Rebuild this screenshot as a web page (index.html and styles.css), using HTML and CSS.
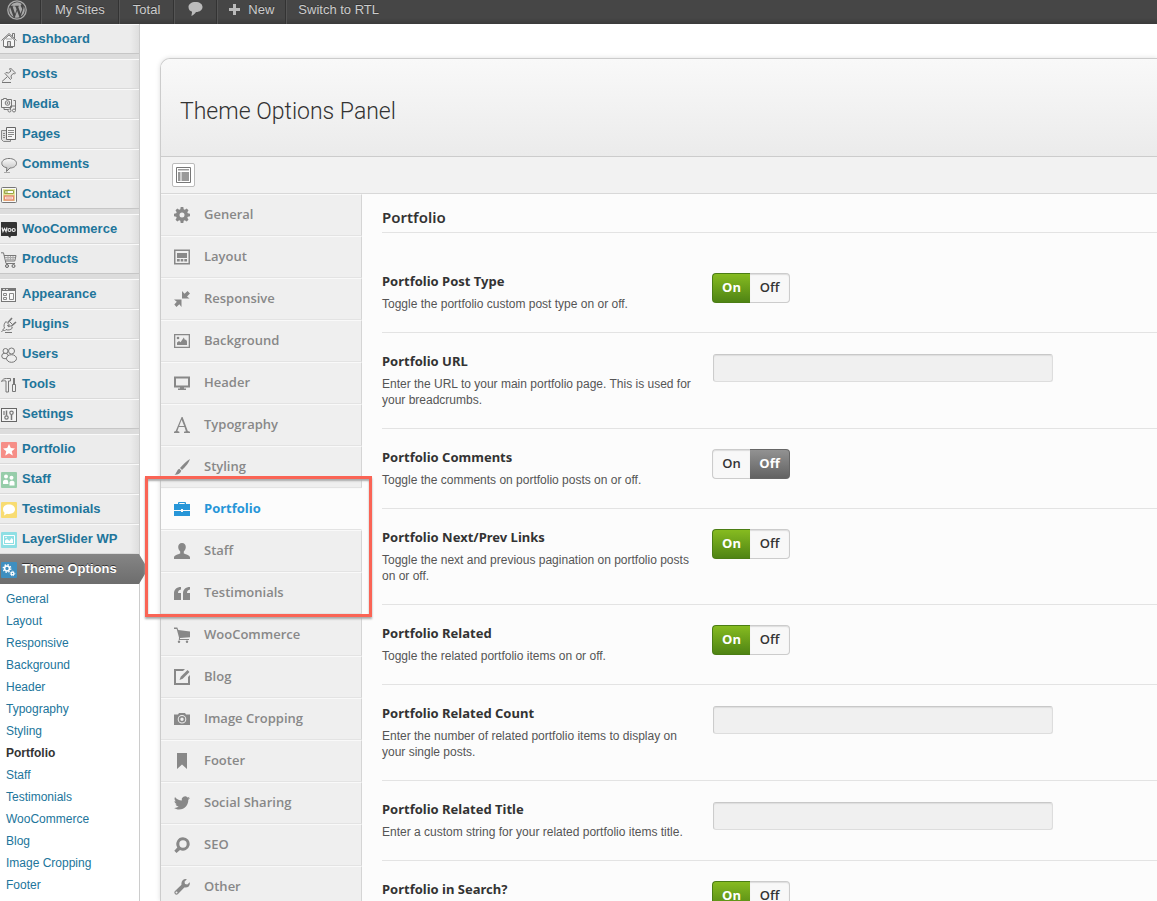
FILE: index.html
```html
<!DOCTYPE html>
<html lang="en">
<head>
<meta charset="utf-8">
<title>Theme Options Panel</title>
<link rel="stylesheet" href="styles.css">
</head>
<body>
<div class="page">
<header class="adminbar">
  <a class="bar-item bar-logo" href="#" aria-label="WordPress"><svg width="20" height="20" viewBox="0 0 20 20"><circle cx="10" cy="10" r="9.2" fill="none" stroke="#aaa" stroke-width="1.3"/><path fill="#aaa" d="M2.3 10c0 3 1.800 5.700 4.300 6.900L3 7C2.500 8 2.300 9 2.300 10zM15.200 9.600c0-1-.4-1.600-.7-2.100-.4-.7-.8-1.200-.8-1.900 0-.7.5-1.400 1.300-1.400A7.700 7.700 0 0 0 3.600 5.800h2.900v.6h-.9l2.500 7.500 1.500-4.500-1.100-3h-.9v-.6h4.500v.6h-1l2.500 7.400.7-2.300c.4-1 .9-1.300.9-1.900zM10.100 10.700l-2.300 6.700c1.500.4 3.200.4 4.700-.1zM16.700 6.300c.1 1.400-.2 2.500-.6 3.500l-2.300 6.800c3.600-2 5.100-6.600 2.900-10.300z"/></svg></a>
  <a class="bar-item" href="#">My Sites</a>
  <a class="bar-item" href="#">Total</a>
  <a class="bar-item" href="#" aria-label="Comments"><svg width="15" height="14" viewBox="0 0 15 14"><path fill="#bbb" d="M7.500 0C3.400 0 .5 2.100.5 5c0 2.600 1.500 4.200 3.600 4.700L3.400 14c2-1 3.600-2.400 4.600-4 4-.1 6.500-2 6.500-5s-2.900-5-7-5z"/></svg></a>
  <a class="bar-item bar-new" href="#"><svg width="11" height="11" viewBox="0 0 11 11"><path fill="#bbb" d="M4 0h3v4h4v3H7v4H4V7H0V4h4z"/></svg>New</a>
  <a class="bar-item bar-new" href="#">Switch to RTL</a>
</header>
<div class="columns">
<nav class="sidebar" aria-label="Admin menu">
  <ul class="menu">
    <li><a href="#"><svg class="ic" viewBox="0 0 16 16"><g fill="none" stroke="#777"><path fill="#f6f6f6" d="M2.500 8v6.500h11V8L8 3z"/><path d="M.5 8.500L8 1.500l7.500 7M11.500 4.500v-3h2v5M6.500 14.500v-5h3v5M4 15.500h8"/><path stroke="#aaa" d="M5 7h6M8 10v4"/></g></svg>Dashboard</a></li>
  </ul>
  <ul class="menu">
    <li><a href="#"><svg class="ic" viewBox="0 0 16 16"><path fill="#e8e8e8" stroke="#777" d="M9.500 1l5 5-1 1-1.500-.5-2 2.500.5 2.500-1 1L4 6.500l1-1 2.500.5L10 4 8.500 2z"/><path stroke="#777" d="M6 10l-5 4.500M1 15.500h9" fill="none"/></svg>Posts</a></li>
    <li><a href="#"><svg class="ic" viewBox="0 0 16 16"><g fill="#f2f2f2" stroke="#777"><path d="M.5 2.500h2v-1h3v1h5v8H.5z"/><circle cx="6.500" cy="6" r="2.300"/><circle cx="6.500" cy="6" r=".6"/><path fill="none" d="M12.500 3.500h2v10M9.500 14v-5h5M3 10.500v2h4"/><circle cx="8.500" cy="13.500" r="1.500"/><circle cx="13" cy="13.500" r="1.500"/></g></svg>Media</a></li>
    <li><a href="#"><svg class="ic" viewBox="0 0 16 16"><path fill="#ddd" stroke="#888" d="M.5 3.500h9v11h-7l-2-2z"/><path fill="#f6f6f6" stroke="#666" d="M5.500.5h9v12h-9z"/><path stroke="#888" d="M7 3.500h6M7 5.500h6M7 7.500h6M7 9.500h4M2 6.500h2M2 8.500h2M2 10.500h2"/></svg>Pages</a></li>
    <li><a href="#"><svg class="ic" viewBox="0 0 16 16"><defs><linearGradient id="bub" x2="0" y2="1"><stop stop-color="#fafafa"/><stop offset="1" stop-color="#bbb"/></linearGradient></defs><path fill="url(#bub)" stroke="#777" d="M8 1.500c4.200 0 7.500 2 7.500 4.800s-3 4.700-6.500 4.700l-3.500 3.500.3-3.800C2.500 10.200.8 8.500.8 6.300.8 3.500 3.800 1.500 8 1.500z"/><path stroke="#aaa" d="M3 15.500h6"/></svg>Comments</a></li>
    <li><a href="#"><svg class="ic" viewBox="0 0 16 16"><rect x=".5" y=".5" width="15" height="15" rx="1" fill="#fafafa" stroke="#777"/><path fill="#e4e89c" d="M2 2h12v12H2z"/><path fill="#fff" stroke="#9aa648" d="M3.500 3.500h9v3h-9z"/><path stroke="#9aa648" d="M4 5h3"/><path fill="#fff" stroke="#e58a70" stroke-width="1.500" d="M3.500 9h9v4h-9z"/><path stroke="#e58a70" d="M5 11h6"/></svg>Contact</a></li>
  </ul>
  <ul class="menu">
    <li><a href="#"><svg class="ic" viewBox="0 0 16 16"><path fill="#333" d="M0 0h15q1 0 1 1v12q0 1-1 1h-5l-1 2-2-2H0z"/><path fill="none" stroke="#eee" stroke-width="1.200" d="M1 5.500l1 4 1.500-3 1.500 3 1-4"/><circle cx="8.500" cy="8" r="1.500" fill="none" stroke="#eee" stroke-width="1.200"/><circle cx="12.700" cy="8" r="1.500" fill="none" stroke="#eee" stroke-width="1.200"/></svg>WooCommerce</a></li>
    <li><a href="#"><svg class="ic" viewBox="0 0 16 16"><path fill="#eee" stroke="#777" d="M0 .8h2.500L5 11.500h9M3 3.500h12l-1.200 5.500H4.500"/><path stroke="#aaa" d="M4 5.500h10M4.500 7.300h9M7 4v5M9.500 4v5M12 4v5"/><circle cx="6" cy="14" r="1.500" fill="#ddd" stroke="#666"/><circle cx="12.500" cy="14" r="1.500" fill="#ddd" stroke="#666"/></svg>Products</a></li>
  </ul>
  <ul class="menu">
    <li><a href="#"><svg class="ic" viewBox="0 0 16 16"><rect x=".5" y="1.500" width="14" height="13" fill="#f8f8f8" stroke="#777"/><path fill="#777" d="M0 1h15v3H0z"/><path stroke="#ddd" d="M2 2.500h2M5 2.500h2"/><path fill="none" stroke="#888" d="M2.500 6.500h3v2h-3zM2.500 10.500h3v2h-3zM8.500 6.500h4v6h-4z"/></svg>Appearance</a></li>
    <li><a href="#"><svg class="ic" viewBox="0 0 16 16"><path fill="#eee" stroke="#777" d="M5 4.500L11.500 11c-2 2-4.500 2.500-6.500 1.500L3.500 14 2 12.500 3.500 11C2.500 9 3 6.500 5 4.500z"/><path stroke="#777" stroke-width="1.600" fill="none" d="M7 5.500l4-4.500M10.500 9l4.500-4M6.500 8l2 2"/><path stroke="#777" fill="none" d="M3 13c-1 0-1.500.5-2.500 2M4 15.500h7M9 5l2.500 2.500"/></svg>Plugins</a></li>
    <li><a href="#"><svg class="ic" viewBox="0 0 16 16"><g fill="#eee" stroke="#777"><circle cx="4.500" cy="4" r="2.500"/><ellipse cx="4" cy="9" rx="3.300" ry="2.800"/><circle cx="10.500" cy="4" r="3"/><ellipse cx="10.500" cy="11.500" rx="5" ry="3.800"/></g></svg>Users</a></li>
    <li><a href="#"><svg class="ic" viewBox="0 0 16 16"><g fill="#eee" stroke="#777"><path d="M.5 4.500c1-2.500 3-3 5-3h4v2.500h-2v11h-2.500V4C3 3.500 2 3.800.5 4.500z"/><path d="M12.500 1v6M11.500 7.500h3v7h-3zM13.500 1v6"/></g></svg>Tools</a></li>
    <li><a href="#"><svg class="ic" viewBox="0 0 16 16"><rect x=".5" y="1.500" width="15" height="13" fill="#f4f4f4" stroke="#666"/><path stroke="#777" stroke-width="1.500" d="M5.500 3.500v5M10.500 8v5"/><g fill="none" stroke="#777" stroke-width="1.200"><circle cx="5.500" cy="10.500" r="1.700"/><circle cx="10.500" cy="5.800" r="1.700"/><path d="M3 4v4"/></g></svg>Settings</a></li>
  </ul>
  <ul class="menu">
    <li><a href="#"><svg class="ic" viewBox="0 0 16 16"><rect width="16" height="16" rx="1" fill="#f68e87"/><path fill="#fff" d="M8 2l1.800 4 4.200.4-3.200 2.900 1 4.200L8 11.300l-3.800 2.200 1-4.200L2 6.400 6.200 6z"/></svg>Portfolio</a></li>
    <li><a href="#"><svg class="ic" viewBox="0 0 16 16"><rect width="16" height="16" rx="1" fill="#97cdaa"/><g fill="#fff"><circle cx="5" cy="4.500" r="2"/><circle cx="10.500" cy="5.800" r="2"/><path d="M2 12V9.500c0-2 4.800-2.500 5-.5l.5 3zM8.500 13.500v-3c0-2.500 5-2.500 5 0v3z"/></g></svg>Staff</a></li>
    <li><a href="#"><svg class="ic" viewBox="0 0 16 16"><rect width="16" height="16" rx="1" fill="#f8dc72"/><path fill="#fff" d="M8 2.500c3.500 0 6 2 6 4.800S11.500 12 8 12c-.8 0-1.400 0-2-.2L3 13.500l.5-2.800C2.500 10 2 8.800 2 7.300c0-2.800 2.500-4.800 6-4.800z"/></svg>Testimonials</a></li>
    <li><a href="#"><svg class="ic" viewBox="0 0 16 16"><rect width="16" height="16" rx="1" fill="#8fdfe4"/><path fill="none" stroke="#fff" d="M2.500 3.500h11v9h-11z"/><path fill="#fff" d="M4 11V8.500L6 7l2.500 2 2-3 1.500 1.500V11z"/><circle cx="5" cy="5.500" r=".8" fill="#fff"/></svg>LayerSlider WP</a></li>
    <li class="current"><a href="#"><svg class="ic" viewBox="0 0 16 16"><rect width="16" height="16" rx="1" fill="#3f8fc0"/><circle cx="6" cy="6.500" r="2.400" fill="none" stroke="#fff" stroke-width="1.500"/><circle cx="6" cy="6.500" r="3.700" fill="none" stroke="#fff" stroke-width="1.500" stroke-dasharray="1.450 1.450"/><circle cx="11.500" cy="11.500" r="1.300" fill="none" stroke="#fff" stroke-width="1.200"/><circle cx="11.500" cy="11.500" r="2.300" fill="none" stroke="#fff" stroke-dasharray="1 .8"/></svg>Theme Options</a></li>
  </ul>
  <ul class="submenu">
    <li><a href="#">General</a></li>
    <li><a href="#">Layout</a></li>
    <li><a href="#">Responsive</a></li>
    <li><a href="#">Background</a></li>
    <li><a href="#">Header</a></li>
    <li><a href="#">Typography</a></li>
    <li><a href="#">Styling</a></li>
    <li><a class="active" href="#">Portfolio</a></li>
    <li><a href="#">Staff</a></li>
    <li><a href="#">Testimonials</a></li>
    <li><a href="#">WooCommerce</a></li>
    <li><a href="#">Blog</a></li>
    <li><a href="#">Image Cropping</a></li>
    <li><a href="#">Footer</a></li>
  </ul>
</nav>
<main class="panel">
  <div class="panel-head"><h1>Theme Options Panel</h1></div>
  <div class="toolbar"><button type="button" class="tool" aria-label="Toggle layout"><svg width="15" height="16" viewBox="0 0 15 16"><path fill="#fff" stroke="#777" d="M.5.5h14v15H.5z"/><path fill="#999" d="M2 2h11v1.500H2zM2 5h2.500v9H2zM5.500 5H13v9H5.500z"/></svg></button></div>
  <div class="panel-body">
    <nav class="tabs" aria-label="Option sections">
      <a href="#"><svg class="ti" viewBox="0 0 16 16"><path fill-rule="evenodd" d="M6.700 0h2.600l.4 2.200 1.100.5L12.700 1.500l1.800 1.800-1.200 1.900.5 1.100 2.200.4v2.600l-2.200.4-.5 1.100 1.200 1.900-1.800 1.800-1.900-1.200-1.100.5-.4 2.200H6.700l-.4-2.200-1.100-.5-1.900 1.200-1.800-1.800 1.200-1.900-.5-1.100L0 9.300V6.700l2.200-.4.5-1.100L1.500 3.300l1.800-1.800 1.900 1.200 1.100-.5zM8 5.500a2.500 2.500 0 1 0 0 5 2.500 2.500 0 0 0 0-5z"/></svg>General</a>
      <a href="#"><svg class="ti" viewBox="0 0 16 16"><path fill-rule="evenodd" d="M0 .5h16v15H0zM1.500 2v12h13V2z"/><path d="M3 4h10v5H3zM3 10h2.700v2.500H3zM6.700 10h2.600v2.500H6.700zM10.300 10H13v2.500h-2.700z"/></svg>Layout</a>
      <a href="#"><svg class="ti" viewBox="0 0 16 16"><path d="M8 0v7.500h7.500L13 5.500l3-3L13.500 0 10.500 2.700zM0 8.500h7.500V16L5.300 13.300 2.500 16 .3 13.500l2.500-2.700z"/></svg>Responsive</a>
      <a href="#"><svg class="ti" viewBox="0 0 16 16"><path fill-rule="evenodd" d="M0 1h16v14H0zM1.300 2.300v11.400h13.400V2.300z"/><circle cx="4" cy="5" r="1.300"/><path d="M3 12V9.500L5 8l1.500 1.300L9.800 4.500 11 7l1-.5 1 2V12z"/></svg>Background</a>
      <a href="#"><svg class="ti" viewBox="0 0 16 16"><path fill-rule="evenodd" d="M0 1.500h16v11H0zM2 3.500v7h12v-7z"/><path d="M6 12h4v1.500h2V15H4v-1.500h2z"/></svg>Header</a>
      <a href="#"><svg class="ti" viewBox="0 0 16 16"><path fill-rule="evenodd" d="M7.600 0h1l5.200 14 2.200.8v1.100h-6v-1.100l1.900-.6L10.500 10H4.800l-1.400 4 2 .8v1.100H0v-1.100l1.700-.7zM7.600 2.700L5.200 9h5z"/></svg>Typography</a>
      <a href="#"><svg class="ti" viewBox="0 0 16 16"><path d="M16 0c-1 3.500-4.500 8-8 11L6 9C9 5.500 12.500 2 16 0zM5.300 9.700l2 2C6.300 14.500 4 16 .5 15.800c1.800-1 2.200-4.800 4.800-6.100z"/></svg>Styling</a>
      <a href="#" class="on"><svg class="ti" viewBox="0 0 16 16"><path fill-rule="evenodd" d="M0 3h4V2q0-1 1-1h6q1 0 1 1v1h4v6h-7V8H7v1H0zM5.300 3h5.400V2H5.300zM0 10h7v1h2v-1h7v5H0z"/></svg>Portfolio</a>
      <a href="#"><svg class="ti" viewBox="0 0 16 16"><path d="M8 0c2.500 0 3.800 1.700 3.800 4 0 1.800-.8 3.300-2 4.500v2C12 11.500 16 12.300 16 14.500V16H0v-1.500c0-2.200 4-3 6.200-4v-2c-1.200-1.200-2-2.700-2-4.500C4.200 1.700 5.500 0 8 0z"/></svg>Staff</a>
      <a href="#"><svg class="ti" viewBox="0 0 16 16"><path d="M7 2v2.500C4.800 5 4 6.300 4 8h3v7H0V8.500C0 4.500 2.500 2 7 2zM16 2v2.500C13.800 5 13 6.300 13 8h3v7H9V8.500C9 4.500 11.500 2 16 2z"/></svg>Testimonials</a>
      <a href="#"><svg class="ti" viewBox="0 0 16 16"><path d="M0 .5h3.300l1 2.500L16 4.500v5.800L6 11v1h9v1H4.800L5 10.500 2.700 2H0z"/><circle cx="5" cy="14.800" r="1.200"/><circle cx="13" cy="14.800" r="1.200"/></svg>WooCommerce</a>
      <a href="#"><svg class="ti" viewBox="0 0 16 16"><path d="M0 0h11L9 2H2v12h12V8l2-2v10H0z"/><path d="M13.500 1l2 2-6.800 6.800-3.200 1.300 1.200-3.300z"/></svg>Blog</a>
      <a href="#"><svg class="ti" viewBox="0 0 16 16"><path fill-rule="evenodd" d="M0 3.500h4l1-1.500h6l1 1.500h4V14H0zM8 4a4.300 4.300 0 1 0 0 8.600A4.300 4.300 0 0 0 8 4z"/><circle cx="8" cy="8.300" r="2.500" fill="none" stroke="currentColor" stroke-width="1.600"/></svg>Image Cropping</a>
      <a href="#"><svg class="ti" viewBox="0 0 16 16"><path d="M3 0h10v16l-5-4.500L3 16z"/></svg>Footer</a>
      <a href="#"><svg class="ti" viewBox="0 0 16 16"><path d="M16 3c-.6.300-1.200.5-1.900.5.7-.4 1.200-1 1.400-1.800-.6.400-1.300.6-2 .8A3.300 3.300 0 0 0 7.800 5.500C5 5.400 2.600 4 1 2c-.9 1.500-.4 3.400 1 4.400-.5 0-1-.2-1.500-.4 0 1.600 1.100 2.900 2.600 3.200-.5.100-1 .2-1.500.1.400 1.300 1.600 2.200 3.100 2.300A6.600 6.600 0 0 1 0 13c1.400.9 3.100 1.500 5 1.500 6 0 9.500-5.100 9.300-9.800.7-.5 1.200-1 1.700-1.700z"/></svg>Social Sharing</a>
      <a href="#"><svg class="ti" viewBox="0 0 16 16"><path fill-rule="evenodd" d="M9 .3a6.700 6.700 0 1 1-3 12.700l-3.500 3L.3 13.800l3-3.300A6.700 6.700 0 0 1 9 .3zM9 3.300a3.700 3.700 0 1 0 0 7.400 3.700 3.700 0 0 0 0-7.400z"/></svg>SEO</a>
      <a href="#"><svg class="ti" viewBox="0 0 16 16"><path fill-rule="evenodd" d="M12.800.3L10.500 2.700l.5 2.300 2.300.5 2.400-2.300c.8 2.800-1.300 6-5.400 5.300L4 15c-2 2-5-.9-3-3l6.500-6.200C6.700 2 10-.6 12.800.3zM2.500 12.500a1 1 0 1 0 0 2 1 1 0 0 0 0-2z"/></svg>Other</a>
      <span class="highlight"></span>
    </nav>
    <form class="options">
      <h2>Portfolio</h2>
      <fieldset class="row"><div class="info"><h3>Portfolio Post Type</h3><p>Toggle the portfolio custom post type on or off.</p></div>
        <div class="toggle"><label><input type="radio" name="ptype" checked>On</label><label class="off"><input type="radio" name="ptype">Off</label></div></fieldset>
      <div class="row"><div class="info"><h3><label for="url">Portfolio URL</label></h3><p>Enter the URL to your main portfolio page. This is used for your breadcrumbs.</p></div>
        <input class="text" id="url" type="text"></div>
      <fieldset class="row"><div class="info"><h3>Portfolio Comments</h3><p>Toggle the comments on portfolio posts on or off.</p></div>
        <div class="toggle"><label><input type="radio" name="comments">On</label><label class="off"><input type="radio" name="comments" checked>Off</label></div></fieldset>
      <fieldset class="row"><div class="info"><h3>Portfolio Next/Prev Links</h3><p>Toggle the next and previous pagination on portfolio posts on or off.</p></div>
        <div class="toggle"><label><input type="radio" name="links" checked>On</label><label class="off"><input type="radio" name="links">Off</label></div></fieldset>
      <fieldset class="row"><div class="info"><h3>Portfolio Related</h3><p>Toggle the related portfolio items on or off.</p></div>
        <div class="toggle"><label><input type="radio" name="related" checked>On</label><label class="off"><input type="radio" name="related">Off</label></div></fieldset>
      <div class="row"><div class="info"><h3><label for="count">Portfolio Related Count</label></h3><p>Enter the number of related portfolio items to display on your single posts.</p></div>
        <input class="text" id="count" type="text"></div>
      <div class="row"><div class="info"><h3><label for="rtitle">Portfolio Related Title</label></h3><p>Enter a custom string for your related portfolio items title.</p></div>
        <input class="text" id="rtitle" type="text"></div>
      <fieldset class="row"><div class="info"><h3>Portfolio in Search?</h3></div>
        <div class="toggle"><label><input type="radio" name="search" checked>On</label><label class="off"><input type="radio" name="search">Off</label></div></fieldset>
    </form>
  </div>
</main>
</div>
</div>
</body>
</html>
```

FILE: styles.css
```css
* { box-sizing: border-box; }
body { margin: 0; background: #fff; font-family: "Liberation Sans", Arial, sans-serif; font-size: 12px; color: #555; }
ul, h1, h2, h3, p { margin: 0; padding: 0; }
ul { list-style: none; }
a { text-decoration: none; }
.page { height: 100vh; overflow: hidden; display: flex; flex-direction: column; }

/* top bar */
.adminbar { flex: none; display: flex; height: 24px; background: linear-gradient(#464646 75%, #3a3a3a); }
.bar-item { display: flex; align-items: center; gap: 8px; padding: 0 13px 6px; font-size: 13px; color: #ccc; text-shadow: 0 -1px 0 #333; border-right: 1px solid #333; border-left: 1px solid #555; }
.bar-logo { padding: 0 13px 4px 7px; border-left: 0; }
.bar-new { padding: 0 11px 6px; }
.bar-item:last-child { border-right: 0; }

/* main menu */
.columns { flex: 1; display: flex; min-height: 0; }
.sidebar { flex: none; width: 140px; border-right: 1px solid #ccc; background: #fff; }
.menu { background: linear-gradient(90deg, #ececec 130px, #dedede); border-bottom: 5px solid #dcdcdc; box-shadow: inset 0 -1px 0 #c6c6c6; }
.menu:nth-last-child(2) { border-bottom: 0; }
.menu a { display: flex; align-items: center; gap: 5px; height: 30px; padding: 0 0 2px 1px; border-top: 1px solid #f9f9f9; border-bottom: 1px solid #dadada; font-size: 13px; font-weight: bold; color: #21759b; }
.menu li:last-child a { border-bottom-color: #c6c6c6; }
.ic { flex: none; width: 16px; height: 16px; margin-top: 4px; }
.current { position: relative; }
.menu .current a { background: linear-gradient(#858585, #6d6d6d); border-top: 0; border-bottom: 0; color: #fff; text-shadow: 0 -1px 0 #333; }
.current::after { content: ""; position: absolute; left: 100%; top: 0; width: 9px; height: 30px; background: linear-gradient(#858585, #6d6d6d); clip-path: polygon(0 0, 100% 50%, 0 100%); }
.submenu { padding: 4px 0 4px 6px; }
.submenu a { display: block; line-height: 22px; color: #21759b; }
.submenu .active { color: #333; font-weight: bold; }

/* panel */
.panel { flex: 1; display: flex; flex-direction: column; min-width: 0; margin: 34px 0 0 20px; border: 1px solid #ccc; border-right: 0; border-bottom: 0; border-radius: 10px 0 0 0; background: #fcfcfc; box-shadow: 0 0 5px #ddd; }
.panel-head { flex: none; display: flex; align-items: center; height: 98px; padding: 8px 19px 0; border-bottom: 1px solid #ccc; border-radius: 9px 0 0 0; background: linear-gradient(#f9f9f9, #ebebeb); }
h1 { font-family: Roboto, "Liberation Sans", sans-serif; font-size: 23px; font-weight: 300; color: #333; }
.toolbar { flex: none; display: flex; align-items: center; height: 37px; padding: 0 11px; background: #f2f2f2; border-bottom: 1px solid #d8d8d8; }
.tool { display: flex; align-items: center; justify-content: center; width: 23px; height: 24px; padding: 0; background: #fff; border: 1px solid #bbb; border-radius: 2px; }
.panel-body { flex: 1; display: flex; min-height: 0; }
.tabs { flex: none; position: relative; width: 201px; font-family: "Open Sans", sans-serif; }
.tabs a { display: flex; align-items: center; gap: 14px; height: 42px; padding: 0 0 2px 13px; background: #efefef; border-top: 1px solid #f9f9f9; border-bottom: 1px solid #e3e3e3; border-right: 1px solid #d5d5d5; font-size: 13px; font-weight: 600; color: #888; }
.tabs .on { background: #fcfcfc; border-right-color: #fcfcfc; color: #2796d8; font-weight: 700; }
.ti { flex: none; width: 16px; height: 16px; margin-top: 2px; fill: currentColor; }
/* callout frame around the post type tabs */
.highlight { position: absolute; left: -16px; top: 282px; width: 227px; height: 141px; border: 3px solid #fa6455; box-shadow: 0 2px 2px #aaa, inset 0 2px 2px #aaa; pointer-events: none; }

/* options */
.options { flex: 1; min-width: 0; padding-left: 20px; }
h2 { margin-bottom: 20px; padding: 11px 0 3px; border-bottom: 1px solid #e3e3e3; font: 600 15px/24px "Noto Sans", sans-serif; color: #333; }
.row { display: grid; grid-template-columns: 320px minmax(0, 1fr); column-gap: 10px; margin: 0; padding: 18px 0 20px; border: 0; border-bottom: 1px solid #e3e3e3; }
h3 { margin-bottom: 5px; font: 700 13px/20px "Noto Sans", sans-serif; color: #333; }
.info p { line-height: 16px; }
.toggle { display: flex; margin-top: 2px; height: 30px; }
.toggle label { display: flex; align-items: center; justify-content: center; position: relative; width: 38px; padding-bottom: 2px; background: #f8f8f8; border: 1px solid #ccc; border-right: 0; border-radius: 4px 0 0 4px; box-shadow: inset 0 1px 1px #ddd; font: 600 13px "Open Sans", sans-serif; color: #333; }
.toggle .off { width: 40px; border: 1px solid #ccc; border-left: 0; border-radius: 0 4px 4px 0; }
.toggle input { position: absolute; inset: 0; margin: 0; opacity: 0; }
.toggle label:has(:checked) { background: linear-gradient(#86bb20, #4f8414); border-color: #4b7d14; box-shadow: none; color: #fff; font-weight: 700; }
.toggle .off:has(:checked) { background: linear-gradient(#929292, #626262); border-color: #666; }
.text { width: 340px; max-width: 100%; height: 28px; margin: 3px 0 0 1px; padding: 0 8px; background: #f0f0f0; border: 1px solid #ddd; border-top-color: #c8c8c8; border-left-color: #ccc; border-radius: 3px; box-shadow: inset 0 1px 1px #ddd; font: inherit; }
```
